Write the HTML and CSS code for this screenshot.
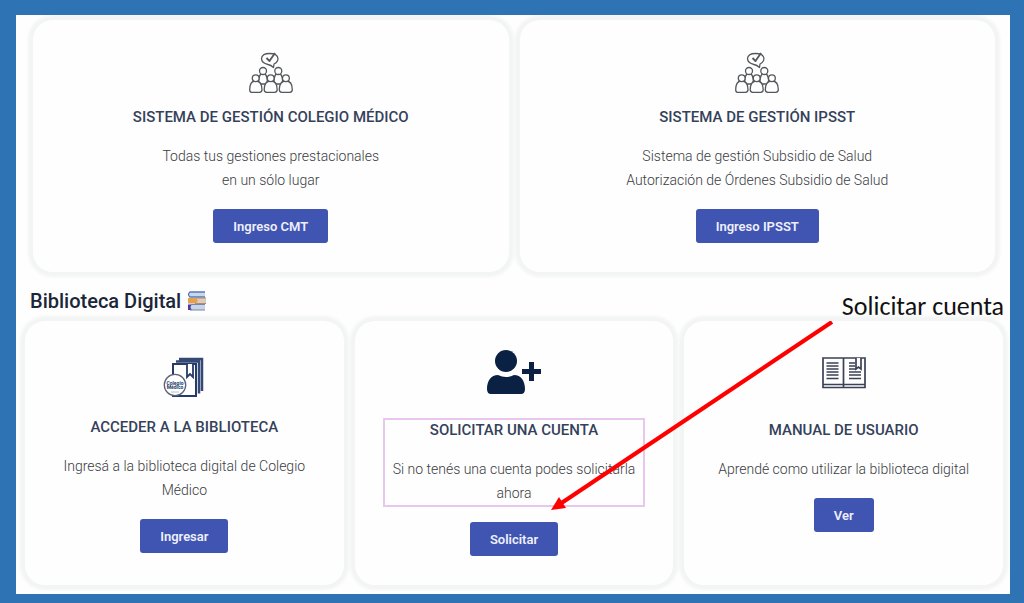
FILE: index.html
```html
<!DOCTYPE html>
<html lang="es">
<head>
<meta charset="utf-8">
<title>Biblioteca Digital</title>
<link rel="stylesheet" href="styles.css">
</head>
<body>
<svg class="defs" aria-hidden="true">
  <symbol id="group" viewBox="0 0 44 44">
    <g fill="#fefefe" stroke="#55575d" stroke-width="1.300" stroke-linejoin="round">
      <path d="M19 13.500Q12.500 12 12.500 7.500Q13 2.500 20.500 2.500Q28.500 2.500 29 7.500Q29 11 25 13L24.500 16.500Q22 14 19 13.500Z"/>
      <path d="M17.500 7l3 3L26 2" fill="none" stroke-width="1.800"/>
      <path d="M14 22.500c4.500 0 5.500 9.500 2.500 10.500h-5c-3-1-2-10.500 2.500-10.500zM29.300 22.500c4.500 0 5.500 9.500 2.500 10.500h-5c-3-1-2-10.500 2.500-10.500z"/>
      <circle cx="14" cy="20" r="3.500"/><circle cx="29.300" cy="20" r="3.500"/>
      <path d="M6.500 30c5 0 6.500 4 6.500 8.500q0 2.800-2.500 2.800h-8Q.7 41.300.7 38.500C.7 34 2 30 6.500 30zM21.700 30c5 0 6.500 4 6.500 8.500q0 2.800-2.500 2.800h-8q-2.500 0-2.500-2.800c0-4.500 1.500-8.500 6.500-8.500zM36.900 30c5 0 6.400 4 6.400 8.500q0 2.800-2.500 2.800h-8q-2.500 0-2.500-2.800c0-4.500 1.500-8.500 6.600-8.500z"/>
      <circle cx="6.700" cy="27.300" r="3.400"/><circle cx="21.700" cy="27.300" r="3.400"/><circle cx="36.900" cy="27.300" r="3.400"/>
    </g>
  </symbol>
</svg>
<main class="panel">
  <section class="row row-top">
    <article class="card">
      <div class="icon"><svg width="44" height="44"><use href="#group"/></svg></div>
      <h3>SISTEMA DE GESTIÓN COLEGIO MÉDICO</h3>
      <p>Todas tus gestiones prestacionales<br>en un sólo lugar</p>
      <button type="button">Ingreso CMT</button>
    </article>
    <article class="card">
      <div class="icon"><svg width="44" height="44"><use href="#group"/></svg></div>
      <h3>SISTEMA DE GESTIÓN IPSST</h3>
      <p>Sistema de gestión Subsidio de Salud<br>Autorización de Órdenes Subsidio de Salud</p>
      <button type="button">Ingreso IPSST</button>
    </article>
  </section>

  <header class="heading">
    <h2>Biblioteca Digital
      <svg width="20" height="20" viewBox="0 0 20 20" aria-hidden="true">
        <path d="M3 1h15v5H3q-2-2.500 0-5" fill="#c6d8ef"/><path d="M18 1H3q-3 2.500 0 5h15" fill="none" stroke="#557bb5" stroke-width="1.300"/>
        <path d="M1 7h18v6H1z" fill="#dccbc0"/><path d="M1 7h8l2 3-2 2H1z" fill="#e5a14b"/><path d="M9 7h10M8 12.500h11" stroke="#b98965"/>
        <path d="M3 13.500h15V19H3q-3-2.500 0-5.500" fill="#c9d5e6"/><path d="M5 13.500q-3 2.500 0 5.500H1v-5.500z" fill="#4b3b9a"/><path d="M3 19h15M4 13.500h14" stroke="#7287b3"/>
      </svg>
    </h2>
    <span class="callout">Solicitar cuenta</span>
  </header>

  <section class="row row-library">
    <article class="card">
      <div class="icon icon-library">
        <svg width="42" height="42" viewBox="0 0 42 42" aria-hidden="true">
          <path d="M16 2h23v32M13 4.500h23v32" fill="none" stroke="#344975" stroke-width="2.500"/>
          <path d="M10 7h23v32H10z" fill="#fff" stroke="#263b69" stroke-width="2"/>
          <path d="M24 7v13l3-3 3 3V7" fill="#fff" stroke="#263b69" stroke-width="1.800"/>
          <circle cx="12" cy="28" r="10.700" fill="#fff" stroke="#59627a" stroke-width="1.300"/>
          <text x="12" y="28" class="seal">Colegio</text><text x="12" y="32" class="seal">Médico</text>
          <path d="M8 35h8" stroke="#a3adc4" stroke-width=".8"/>
        </svg>
      </div>
      <h3>ACCEDER A LA BIBLIOTECA</h3>
      <p>Ingresá a la biblioteca digital de Colegio Médico</p>
      <button type="button">Ingresar</button>
    </article>
    <article class="card">
      <div class="icon icon-user">
        <svg width="54" height="44" viewBox="0 0 54 44" aria-hidden="true">
          <g fill="#0a2144"><circle cx="19" cy="11" r="11"/><path d="M11 25q8 4 16 0c7 0 11 6 11 14q0 5-4 5H4q-4 0-4-5c0-8 4-14 11-14"/><path d="M42 12h5v7h7v5h-7v7h-5v-7h-7v-5h7z"/></g>
        </svg>
      </div>
      <div class="selected">
        <h3>SOLICITAR UNA CUENTA</h3>
        <p>Si no tenés una cuenta podes solicitarla ahora</p>
      </div>
      <button type="button">Solicitar</button>
    </article>
    <article class="card">
      <div class="icon icon-manual">
        <svg width="44" height="32" viewBox="0 0 44 32" aria-hidden="true">
          <g fill="none" stroke="#3b4254" stroke-width="1.700"><path d="M1 1h42v29.500H1zM21.500 1v29.500M1 27.500h42"/><path d="M4.500 6h12M4.500 9h12M4.500 12h12M4.500 15h12M4.500 18h12M4.500 21.500h12M27 6h6M27 9h6M27 12h7M27 15h12M27 18h12M27 21.500h12" stroke-width="1.600"/><path d="M34 1v11l2.500-2 2.500 2V1" fill="#fff"/></g>
        </svg>
      </div>
      <h3>MANUAL DE USUARIO</h3>
      <p>Aprendé como utilizar la biblioteca digital</p>
      <button type="button">Ver</button>
    </article>
    <svg class="arrow" width="282" height="192" viewBox="0 0 282 192" aria-hidden="true"><path d="M281 1L9 183" stroke="#f00" stroke-width="4.200"/><path d="M0 189l8-13 7 11z" fill="#f00"/></svg>
  </section>
</main>
</body>
</html>
```
FILE: styles.css
```css
* { box-sizing: border-box; }
body {
  margin: 0;
  min-height: 100vh;
  padding: 15px 14px 9px 16px;
  background: #2e74b5;
  font-family: Roboto, "Liberation Sans", sans-serif;
  color: #3a3c42;
}
.defs { position: absolute; width: 0; height: 0; }
.panel { overflow: hidden; background: #fefefe; }
.row { display: grid; gap: 11px; }
.row-top { grid-template-columns: repeat(2, 1fr); padding: 5px 15px 0 17px; }
.row-library {
  position: relative;
  grid-template-columns: repeat(3, 1fr);
  padding: 0 7px 9px 9px;
}
.card {
  display: flex;
  flex-direction: column;
  align-items: center;
  padding: 0 28px 29px;
  border-radius: 20px;
  background: #fefefe;
  box-shadow: 0 0 3px 5px #f3f4f4;
  text-align: center;
}
.icon { height: 87px; padding-top: 31px; }
.icon-library { height: 96px; padding-top: 36px; }
.icon-user { height: 97px; padding-top: 29px; }
.icon-manual { height: 99px; padding-top: 36px; }
.icon svg { display: block; }
.seal { font: bold 5px Roboto, sans-serif; text-anchor: middle; fill: #263b69; }
h3 {
  margin: 0 0 17px;
  color: #35415a;
  font-size: 15px;
  font-weight: 500;
  line-height: 20px;
}
p { margin: 0; font-size: 14px; font-weight: 300; line-height: 24px; }
button {
  height: 34px;
  margin-top: 17px;
  padding: 0 20px;
  border: 0;
  border-radius: 3px;
  background: #4054b2;
  color: #eef0fb;
  font: 600 13px Roboto, "Liberation Sans", sans-serif;
}
.selected {
  align-self: stretch;
  padding: 0 4px;
  border: 2px solid #e9c6ee;
}
.selected + button { margin-top: 15px; }
.heading {
  display: flex;
  justify-content: space-between;
  align-items: center;
  height: 49px;
  padding: 0 6px 0 14px;
}
h2 {
  display: flex;
  align-items: center;
  gap: 6px;
  margin: 0 0 -9px;
  color: #1b2638;
  font-size: 20px;
  font-weight: 500;
}
.callout {
  padding-top: 18px;
  color: #111;
  font: 26px/32px Carlito, Calibri, "Open Sans", sans-serif;
}
.arrow { position: absolute; left: 535px; top: 0; }
```
